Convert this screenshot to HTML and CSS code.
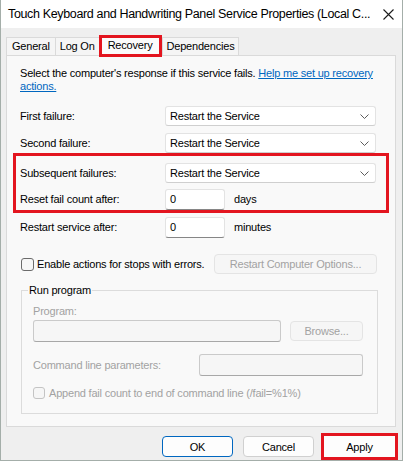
FILE: index.html
```html
<!DOCTYPE html>
<html lang="en">

<head>
    <meta charset="UTF-8">
    <title>Touch Keyboard and Handwriting Panel Service Properties</title>
    <link rel="stylesheet" href="styles.css">
</head>

<body>
    <div class="window">
        <header class="titlebar">
            <span class="title">Touch Keyboard and Handwriting Panel Service Properties (Local C...</span>
            <svg class="close" width="11" height="11" viewBox="0 0 11 11">
                <path d="M0.5 0.5 L10.5 10.5 M10.5 0.5 L0.5 10.5" stroke="#1a1a1a" stroke-width="1.1" fill="none" />
            </svg>
        </header>

        <div class="client">
            <nav class="tabs">
                <div class="tab first">General</div>
                <div class="tab">Log On</div>
                <div class="tab active">Recovery</div>
                <div class="tab">Dependencies</div>
            </nav>

            <main class="panel">
                <p class="intro">Select the computer's response if this service fails. <a href="#">Help me set up recovery actions.</a></p>

                <div class="row first">
                    <label>First failure:</label>
                    <div class="select">Restart the Service<svg width="9" height="5" viewBox="0 0 9 5"><path d="M0.5 0.5 L4.5 4.5 L8.5 0.5" stroke="#5c5c5c" fill="none" /></svg></div>
                </div>
                <div class="row">
                    <label>Second failure:</label>
                    <div class="select">Restart the Service<svg width="9" height="5" viewBox="0 0 9 5"><path d="M0.5 0.5 L4.5 4.5 L8.5 0.5" stroke="#5c5c5c" fill="none" /></svg></div>
                </div>

                <div class="mark">
                    <div class="row">
                        <label>Subsequent failures:</label>
                        <div class="select">Restart the Service<svg width="9" height="5" viewBox="0 0 9 5"><path d="M0.5 0.5 L4.5 4.5 L8.5 0.5" stroke="#5c5c5c" fill="none" /></svg></div>
                    </div>
                    <div class="row reset">
                        <label>Reset fail count after:</label>
                        <div class="num">0</div>
                        <span class="unit">days</span>
                    </div>
                </div>

                <div class="row restart">
                    <label>Restart service after:</label>
                    <div class="num">0</div>
                    <span class="unit">minutes</span>
                </div>

                <div class="row checks">
                    <span class="box"></span>
                    <span>Enable actions for stops with errors.</span>
                    <button class="btn off wide">Restart Computer Options...</button>
                </div>

                <fieldset class="group">
                    <legend>Run program</legend>
                    <div class="glabel">Program:</div>
                    <div class="prog-row">
                        <div class="field prog"></div>
                        <button class="btn off browse">Browse...</button>
                    </div>
                    <div class="cmd-row">
                        <span class="glabel">Command line parameters:</span>
                        <div class="field cmd"></div>
                    </div>
                    <div class="append-row">
                        <span class="box off"></span>
                        <span>Append fail count to end of command line (/fail=%1%)</span>
                    </div>
                </fieldset>
            </main>

            <footer class="footer">
                <button class="btn default">OK</button>
                <button class="btn">Cancel</button>
                <button class="btn marked">Apply</button>
            </footer>
        </div>
    </div>
</body>

</html>
```

FILE: styles.css
```css
body {
    margin: 0;
    font-family: "Liberation Sans", Arial, sans-serif;
    font-size: 11px;
    letter-spacing: -0.2px;
    color: #000;
    background: #fff;
}

.window {
    width: 403px;
    height: 461px;
    box-sizing: border-box;
    border: 1px solid #a4aea9;
    border-top: 0;
    background: #efefef;
    display: flex;
    flex-direction: column;
}

.titlebar {
    height: 28px;
    flex: none;
    background: #fff;
    display: flex;
    align-items: center;
    padding: 0 8px 0 7px;

    .title {
        flex: 1;
        font-size: 12.5px;
        letter-spacing: -0.35px;
        white-space: nowrap;
    }

    .close {
        flex: none;
        margin-top: 1px;
    }
}

.client {
    flex: 1;
    display: flex;
    flex-direction: column;
    padding: 9px 6px 0 5px;
}

.tabs {
    display: flex;
    height: 18px;
    flex: none;
    align-items: flex-start;
}

.tab {
    height: 18px;
    box-sizing: border-box;
    border: 1px solid #dadada;
    border-bottom: 0;
    background: #f5f5f5;
    padding: 0 4px;
    line-height: 17px;
    margin-right: -1px;

    &.first {
        padding: 0 5px;
    }

    &.active {
        position: relative;
        z-index: 1;
        height: 22px;
        margin: -2px 0 0 0;
        border: 3px solid #e3151f;
        background: #fbfbfb;
        line-height: 15px;
        padding: 0 6px;
    }
}

.panel {
    height: 372px;
    flex: none;
    box-sizing: border-box;
    border: 1px solid #dadada;
    background: #f9f9f9;
    padding: 11px 18px 0 13px;
}

.intro {
    margin: 0;
    line-height: 13px;

    a {
        color: #0067c0;
    }
}

.row {
    display: flex;
    align-items: center;
    height: 20px;
    margin-top: 7px;

    label {
        width: 145px;
        flex: none;
    }

    &.first {
        margin-top: 13px;
    }

    &.reset {
        margin-top: 6px;
    }

    &.restart {
        margin-top: 4px;
    }

    &.checks {
        margin-top: 17px;
    }
}

.mark {
    margin: 0 -12px 0 -7px;
    border: 3px solid #e3151f;
    padding: 7px 9px 1px 4px;

    .row:first-child {
        margin-top: 0;
    }
}

.select {
    width: 211px;
    height: 20px;
    box-sizing: border-box;
    border: 1px solid #e3e3e3;
    border-bottom-color: #cfcfcf;
    border-radius: 3px;
    background: #fff;
    display: flex;
    align-items: center;
    justify-content: space-between;
    padding: 0 6px 0 4px;
}

.num {
    width: 60px;
    height: 21px;
    box-sizing: border-box;
    border: 1px solid #e3e3e3;
    border-bottom-color: #868686;
    border-radius: 3px;
    background: #fff;
    padding-left: 4px;
    line-height: 19px;
}

.unit {
    margin-left: 9px;
}

.box {
    width: 13px;
    height: 13px;
    box-sizing: border-box;
    border: 1px solid #6b6b6b;
    border-radius: 3px;
    background: #f6f6f6;
    margin: 0 3px 0 1px;
    flex: none;

    &.off {
        width: 12px;
        height: 12px;
        border-color: #c4c4c4;
        margin: 0 4px 0 0;
    }
}

.btn {
    font: inherit;
    letter-spacing: inherit;
    color: #000;
    width: 71px;
    height: 21px;
    box-sizing: border-box;
    border: 1px solid #d0d0d0;
    border-radius: 4px;
    background: #fdfdfd;
    padding: 0;

    &.off {
        color: #a2a2a2;
        background: #f6f6f6;
        border-color: #e4e4e4;
    }

    &.wide {
        width: 163px;
        height: 20px;
        margin-left: auto;
    }

    &.default {
        border-color: #0067c0;
    }

    &.marked {
        border-color: #fdfdfd;
        border-radius: 0;
        outline: 3px solid #e3151f;
    }
}

.group {
    margin: 10px -1px 0 1px;
    padding: 0 14px 14px 11px;
    border: 1px solid #dcdcdc;
    color: #a2a2a2;

    legend {
        color: #000;
        line-height: 13px;
        padding: 0 1px;
        margin-left: -5px;
    }
}

.glabel {
    line-height: 13px;
}

.group > .glabel {
    margin-top: 8px;
}

.field {
    height: 22px;
    box-sizing: border-box;
    border: 1px solid #cacaca;
    border-bottom-color: #a8a8a8;
    border-radius: 3px;
    background: #f6f6f6;
}

.prog-row {
    display: flex;
    align-items: center;
    margin-top: 2px;

    .prog {
        width: 248px;
    }

    .browse {
        width: 73px;
        height: 20px;
        margin-left: auto;
    }
}

.cmd-row {
    display: flex;
    align-items: center;
    margin-top: 12px;

    .cmd {
        width: 164px;
        margin-left: auto;
    }
}

.append-row {
    display: flex;
    align-items: center;
    margin-top: 11px;
    height: 12px;
}

.footer {
    display: flex;
    justify-content: flex-end;
    gap: 10px;
    margin-top: 9px;
    padding-right: 1px;
}
```
